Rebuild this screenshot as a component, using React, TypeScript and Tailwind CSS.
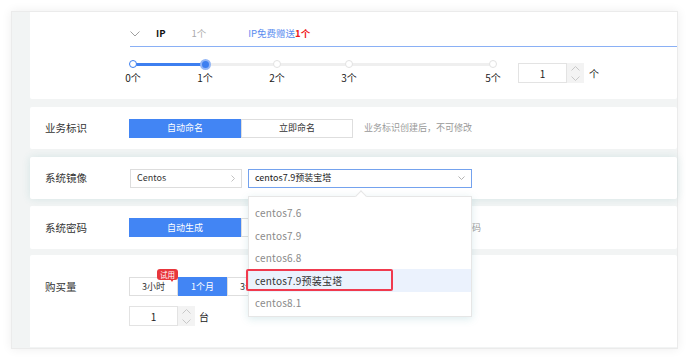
import React from "react";

const ticks = [
  { x: 0, label: "0个" },
  { x: 72, label: "1个" },
  { x: 144, label: "2个" },
  { x: 216, label: "3个" },
  { x: 360, label: "5个" },
];

const images = ["centos7.6", "centos7.9", "centos6.8", "centos7.9预装宝塔", "centos8.1"];

const Stepper = () => (
  <div className="flex flex-col w-[17px] h-[20px] bg-[#f3f3f3]">
    <div className="flex-1 flex items-center justify-center">
      <svg width="9" height="5" viewBox="0 0 9 5" fill="none" stroke="#c8c8c8" strokeWidth="1">
        <polyline points="0.5 4.5 4.5 0.5 8.5 4.5" />
      </svg>
    </div>
    <div className="flex-1 flex items-center justify-center">
      <svg width="9" height="5" viewBox="0 0 9 5" fill="none" stroke="#c8c8c8" strokeWidth="1">
        <polyline points="0.5 0.5 4.5 4.5 8.5 0.5" />
      </svg>
    </div>
  </div>
);

const NumberBox = ({ value }: { value: string }) => (
  <div className="flex items-center">
    <div className="w-[49px] h-[20px] border border-[#e3e3e3] flex items-center justify-center text-[10px] text-[#222]">
      {value}
    </div>
    <Stepper />
  </div>
);

const Label = ({ children }: { children: React.ReactNode }) => (
  <div className="w-[99px] pl-[15px] text-[10.5px] text-[#333] shrink-0">{children}</div>
);

const SegButtons = ({ items, active, width }: { items: string[]; active: number; width: string }) => (
  <div className="flex">
    {items.map((t, i) => (
      <div
        key={t}
        className={
          i === active
            ? `${width} h-[19px] flex items-center justify-center text-[9px] bg-[#4285f4] text-white border border-[#4285f4]`
            : `${width} h-[19px] flex items-center justify-center text-[9px] bg-white text-[#333] border border-[#dedede]`
        }
      >
        {t}
      </div>
    ))}
  </div>
);

export default function App() {
  return (
    <div className="w-[690px] h-[360px] bg-white pt-[11px] pl-[11px] font-['Noto_Sans_CJK_SC','Noto_Sans',sans-serif] overflow-hidden">
      <div className="w-[667px] h-[338px] border border-[#ebebeb] bg-[#f2f4f4] pl-[18px] shadow-[0_0_10px_rgba(0,0,0,0.07)] flex flex-col">
        {/* IP */}
        <div className="h-[87px] bg-white rounded-b-[2px] pl-[100px] pt-[9px] shrink-0">
          <div className="h-[26px] flex items-center border-b-[1.5px] border-[#8ab0f5] text-[9.5px]">
            <svg width="10" height="6" viewBox="0 0 10 6" fill="none" stroke="#a0a0a0" strokeWidth="1">
              <polyline points="0.5 0.5 5 5 9.5 0.5" />
            </svg>
            <span className="ml-[16px] font-bold text-[#111]">IP</span>
            <span className="ml-[26px] text-[#aaa]">1个</span>
            <span className="ml-[42px] text-[#5b8def]">
              IP免费赠送<span className="text-[#f01818] font-bold">1个</span>
            </span>
          </div>
          <div className="flex items-start">
            <div className="relative w-[360px] h-[40px] ml-[3px]">
              <div className="absolute left-0 right-0 top-[15.5px] h-[3px] rounded-full bg-[#efefef]" />
              <div className="absolute left-0 w-[72px] top-[15.5px] h-[3px] rounded-full bg-[#3d7ff0]" />
              {ticks.map((t, i) => (
                <React.Fragment key={t.label}>
                  <div
                    className={
                      i === 0
                        ? "absolute top-[13px] w-[8px] h-[8px] -ml-[4px] rounded-full bg-white border-[1.5px] border-[#3d7ff0]"
                        : i === 1
                        ? "absolute top-[11.5px] w-[11px] h-[11px] -ml-[5.5px] rounded-full bg-[#3d7ff0] border-2 border-[#93b6f6]"
                        : "absolute top-[13px] w-[8px] h-[8px] -ml-[4px] rounded-full bg-white border border-[#e2e2e2]"
                    }
                    style={{ left: t.x }}
                  />
                  <div
                    className="absolute top-[25px] -translate-x-1/2 whitespace-nowrap text-[10px] leading-[12px] text-[#222]"
                    style={{ left: t.x }}
                  >
                    {t.label}
                  </div>
                </React.Fragment>
              ))}
            </div>
            <div className="ml-[25px] mt-[16px] flex items-center">
              <NumberBox value="1" />
              <span className="ml-[5px] text-[10px] text-[#222]">个</span>
            </div>
          </div>
        </div>

        {/* 业务标识 */}
        <div className="h-[42px] mt-[8px] bg-white rounded-[2px] flex items-center shrink-0">
          <Label>业务标识</Label>
          <SegButtons items={["自动命名", "立即命名"]} active={0} width="w-[112px]" />
          <span className="ml-[11px] text-[9px] text-[#999]">业务标识创建后，不可修改</span>
        </div>

        {/* 系统镜像 */}
        <div className="relative z-10 h-[42px] mt-[8px] bg-white rounded-[2px] flex items-center shrink-0 shadow-[0_0_8px_rgba(40,140,140,0.14)]">
          <Label>系统镜像</Label>
          <div className="w-[112px] h-[19px] border border-[#dddddd] flex items-center justify-between pl-[6px] pr-[6px] text-[9px] text-[#333] ml-[1px]">
            <span>Centos</span>
            <svg width="4" height="7" viewBox="0 0 4 7" fill="none" stroke="#bbb" strokeWidth="0.9">
              <polyline points="0.5 0.5 3.5 3.5 0.5 6.5" />
            </svg>
          </div>
          <div className="relative ml-[6px]">
            <div className="w-[224px] h-[19px] border border-[#74a2ee] flex items-center justify-between pl-[6px] pr-[6px] text-[9px] text-[#222]">
              <span>centos7.9预装宝塔</span>
              <svg width="7" height="4" viewBox="0 0 7 4" fill="none" stroke="#aaa" strokeWidth="0.9">
                <polyline points="0.5 0.5 3.5 3.5 6.5 0.5" />
              </svg>
            </div>
            <div className="absolute left-0 top-[27px] w-[224px] h-[121px] bg-white border border-[#e6e6e6] shadow-[0_2px_8px_rgba(60,150,160,0.18)] z-50 pt-[5px]">
              <div className="absolute left-[108px] -top-[4.5px] w-[8px] h-[8px] rotate-45 bg-white border-l border-t border-[#e6e6e6]" />
              {images.map((t, i) => (
                <div
                  key={t}
                  className={
                    i === 3
                      ? "relative h-[22.5px] flex items-center pl-[6px] text-[10px] tracking-[0.2px] text-[#333] bg-[#ebf2fd]"
                      : "relative h-[22.5px] flex items-center pl-[6px] text-[10px] tracking-[0.2px] text-[#8a8a8a]"
                  }
                >
                  {t}
                  {i === 3 && (
                    <div className="absolute -left-[3px] top-0 w-[147px] h-[22px] border-2 border-[#f03a4e] rounded-[2px]" />
                  )}
                </div>
              ))}
            </div>
          </div>
        </div>

        {/* 系统密码 */}
        <div className="h-[43px] mt-[7px] bg-white rounded-[2px] flex items-center shrink-0">
          <Label>系统密码</Label>
          <SegButtons items={["自动生成", "自定义密码"]} active={0} width="w-[112px]" />
          <span className="ml-[11px] text-[9px] text-[#999]">创建后可在控制台中查看密码</span>
        </div>

        {/* 购买量 */}
        <div className="h-[92px] mt-[6px] bg-white rounded-t-[2px] flex items-start pt-[22px] shrink-0">
          <div className="h-[20px] flex items-center">
            <Label>购买量</Label>
          </div>
          <div className="flex flex-col">
            <div className="relative flex">
              <SegButtons items={["3小时", "1个月", "3个月", "6个月", "1年"]} active={1} width="w-[49px]" />
              <div className="absolute left-[28px] -top-[8px] w-[21px] h-[11px] rounded-[3px] bg-[#e8363c] text-white text-[7.5px] leading-[11px] text-center">
                试用
                <div className="absolute left-[13px] top-[10px] w-0 h-0 border-l-[2.5px] border-r-[2.5px] border-t-[3px] border-l-transparent border-r-transparent border-t-[#e8363c]" />
              </div>
            </div>
            <div className="mt-[10px] flex items-center">
              <NumberBox value="1" />
              <span className="ml-[4px] text-[10px] text-[#222]">台</span>
            </div>
          </div>
        </div>
      </div>
    </div>
  );
}
